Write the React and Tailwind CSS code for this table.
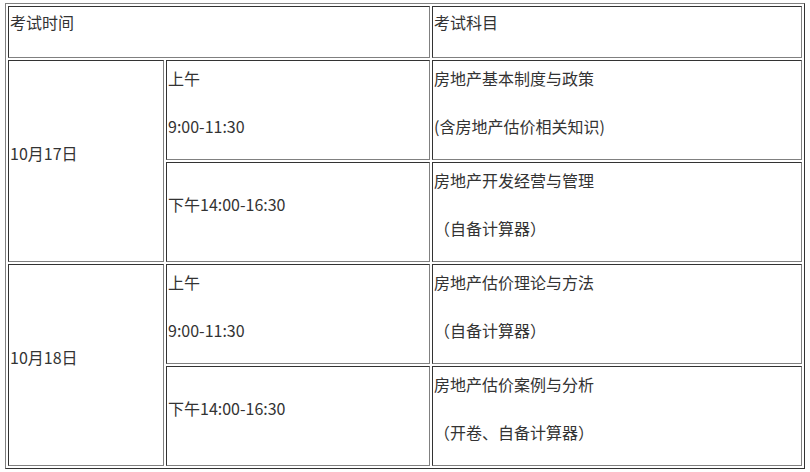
import { Fragment } from "react";

const inset =
  "border border-solid border-t-[#333] border-l-[#333] border-r-[#808080] border-b-[#808080] px-px text-left";

function TwoLine({ a, b }) {
  return (
    <td className={inset + " align-top pt-[5px] h-[100px]"}>
      <div>{a}</div>
      <div className="mt-6">{b}</div>
    </td>
  );
}

function OneLine({ text, rowSpan }) {
  return (
    <td rowSpan={rowSpan} className={inset + " align-middle pb-4 h-[100px]"}>
      {text}
    </td>
  );
}

const days = [
  {
    date: "10月17日",
    am: ["房地产基本制度与政策", "(含房地产估价相关知识)"],
    pm: ["房地产开发经营与管理", "（自备计算器）"],
  },
  {
    date: "10月18日",
    am: ["房地产估价理论与方法", "（自备计算器）"],
    pm: ["房地产估价案例与分析", "（开卷、自备计算器）"],
  },
];

export default function App() {
  return (
    <div
      className="w-[810px] h-[472px] bg-white pl-[5px] pt-[3px] text-[16px] leading-[24px] text-[#333]"
      style={{ fontFamily: '"Noto Sans CJK SC", "Noto Sans", sans-serif' }}
    >
      <table className="w-[800px] table-fixed border-separate border-spacing-[2px] border border-solid border-t-[#808080] border-l-[#808080] border-r-[#333] border-b-[#333]">
        <colgroup>
          <col className="w-[156px]" />
          <col className="w-[264px]" />
          <col className="w-[370px]" />
        </colgroup>
        <tbody>
          <tr>
            <td colSpan={2} className={inset + " align-top pt-[3px] h-[52px]"}>
              考试时间
            </td>
            <td className={inset + " align-top pt-[3px] h-[52px]"}>考试科目</td>
          </tr>
          {days.map((d) => (
            <Fragment key={d.date}>
              <tr>
                <OneLine text={d.date} rowSpan={2} />
                <TwoLine a="上午" b="9:00-11:30" />
                <TwoLine a={d.am[0]} b={d.am[1]} />
              </tr>
              <tr>
                <OneLine text="下午14:00-16:30" />
                <TwoLine a={d.pm[0]} b={d.pm[1]} />
              </tr>
            </Fragment>
          ))}
        </tbody>
      </table>
    </div>
  );
}
